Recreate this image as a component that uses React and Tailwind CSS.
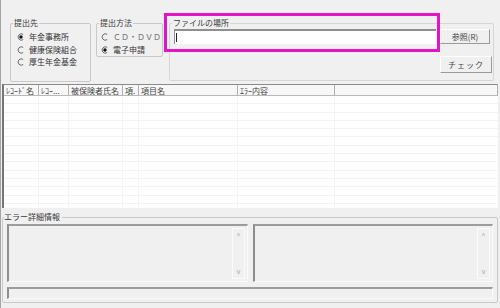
import React from "react";

const font = { fontFamily: '"Noto Sans CJK JP", "Noto Sans", sans-serif' };

// Small classic radio button
const Radio = ({ checked }) => (
  <svg width="8" height="8" viewBox="0 0 8 8" className="shrink-0">
    <path d="M6.2 1.4 A3.2 3.2 0 1 0 6.2 6.6" stroke="#6b6b6b" strokeWidth="1" fill="none" />
    {checked && <circle cx="4" cy="4" r="1.7" fill="#111" />}
  </svg>
);

// Group box with caption sitting on top border
const Group = ({ label, className, children }) => (
  <div className={`relative border border-[#c9c9c9] rounded-[2px] ${className}`}>
    <span className="absolute -top-[6px] left-[2px] bg-[#f0f0f0] px-px text-[8px] leading-[10px] text-[#3a3a3a] whitespace-nowrap">
      {label}
    </span>
    {children}
  </div>
);

const RadioRow = ({ checked, label, wide }) => (
  <div className="flex items-center h-[12.5px]">
    <Radio checked={checked} />
    <span
      className={`ml-[4px] text-[8px] leading-none whitespace-nowrap ${wide ? "text-[#6a6a6a]" : "text-[#333]"}`}
    >
      {label}
    </span>
  </div>
);

const columns = [
  { label: "ﾚｺｰﾄﾞ名", w: "w-[35px]" },
  { label: "ﾚｺｰ...", w: "w-[30px]" },
  { label: "被保険者氏名", w: "w-[54px]" },
  { label: "項.", w: "w-[16px]" },
  { label: "項目名", w: "w-[99px]" },
  { label: "ｴﾗｰ内容", w: "w-[97px]" },
];

// Read only text area with tiny scroll arrows
const DetailBox = ({ className }) => (
  <div
    className={`flex justify-end h-[58px] border-t-2 border-l-2 border-t-[#9c9c9c] border-l-[#8e8e8e] border-r border-b border-r-[#fafafa] border-b-[#fafafa] ${className}`}
  >
    <div className="w-[13px] mr-[2px] my-[2px] border border-[#fbfbfb] flex flex-col items-center justify-between py-[3px] text-[7px] leading-none text-[#a8a8a8]">
      <span>^</span>
      <span>v</span>
    </div>
  </div>
);

const App = () => {
  const rows = Array.from({ length: 14 }, (_, i) => i);

  return (
    <div
      style={font}
      className="w-[500px] h-[308px] bg-[#f0f0f0] border-l border-[#a4a4a4] overflow-hidden flex flex-col"
    >
      {/* Top controls */}
      <div className="h-[84px] flex items-start shrink-0">
        <Group label="提出先" className="ml-[9px] mt-[23px] w-[81px] h-[59px] pt-[7px] pl-[6px]">
          <RadioRow checked label="年金事務所" />
          <RadioRow label="健康保険組合" />
          <RadioRow label="厚生年金基金" />
        </Group>

        <Group label="提出方法" className="ml-[5px] mt-[23px] w-[67px] h-[34px] pt-[7px] pl-[4px]">
          <RadioRow label="ＣＤ・ＤＶＤ" wide />
          <RadioRow checked label="電子申請" />
        </Group>

        <div className="relative ml-[6px] mt-[23px]">
          <Group label="ファイルの場所" className="w-[325px] h-[58px] flex pt-[5px] pl-[4px] !border-[#d6d6d6]">
            <div className="w-[262px] h-[15px] bg-white border-t-2 border-l border-[#8f8f8f] flex items-center pl-[1px]">
              <div className="w-px h-[9px] bg-[#222]" />
            </div>
            <div className="ml-[4px] flex flex-col items-start">
              <button className="w-[50px] h-[15px] bg-[#f0f0f0] border border-t-[#fdfdfd] border-l-[#fdfdfd] border-r-[#9a9a9a] border-b-[#9a9a9a] text-[8px] leading-none text-[#444]">
                参照(R)
              </button>
              <button className="mt-[12px] w-[52px] h-[17px] bg-[#f0f0f0] border border-t-[#fdfdfd] border-l-[#fdfdfd] border-r-[#9a9a9a] border-b-[#9a9a9a] text-[8px] leading-none text-[#444] tracking-[1px]">
                チェック
              </button>
            </div>
          </Group>
          {/* Highlight annotation */}
          <div className="absolute -left-[5px] -top-[10px] w-[276px] h-[39px] border-[3px] border-[#e214c6] pointer-events-none" />
        </div>
      </div>

      {/* Error list */}
      <div className="ml-px w-[496px] h-[124px] shrink-0 bg-white border-l-2 border-t border-l-[#767676] border-t-[#8a8a8a] flex flex-col">
        <div className="h-[11px] flex bg-[#f7f7f7] border-b border-[#b9b9b9] shrink-0">
          {columns.map((col) => (
            <div
              key={col.label}
              className={`${col.w} shrink-0 border-r border-[#b0b0b0] pl-[2px] text-[8px] leading-[11px] text-[#444] whitespace-nowrap overflow-hidden`}
            >
              {col.label}
            </div>
          ))}
          <div className="flex-1 border-r border-[#b0b0b0]" />
        </div>
        <div className="flex-1 relative overflow-hidden">
          {rows.map((r) => (
            <div key={r} className="h-[8.3px] border-b border-[#f3f3f3] flex">
              {columns.map((col) => (
                <div key={col.label} className={`${col.w} shrink-0 border-r border-[#f4f4f4]`} />
              ))}
            </div>
          ))}
        </div>
      </div>

      {/* Error detail */}
      <div className="relative mt-[9px] ml-px w-[496px] h-[86px] border border-[#c9c9c9] rounded-[2px] px-[4px] pt-[6px]">
        <span className="absolute -top-[6px] left-[1px] bg-[#f0f0f0] pr-[2px] text-[8px] leading-[10px] text-[#3a3a3a]">
          エラー詳細情報
        </span>
        <div className="flex gap-[5px]">
          <DetailBox className="w-[241px]" />
          <DetailBox className="w-[240px]" />
        </div>
        <div className="mt-[5px] h-[12px] border-t-2 border-l-2 border-t-[#9c9c9c] border-l-[#8e8e8e] border-r border-b border-r-[#fafafa] border-b-[#fafafa]" />
      </div>
    </div>
  );
};

export default App;
